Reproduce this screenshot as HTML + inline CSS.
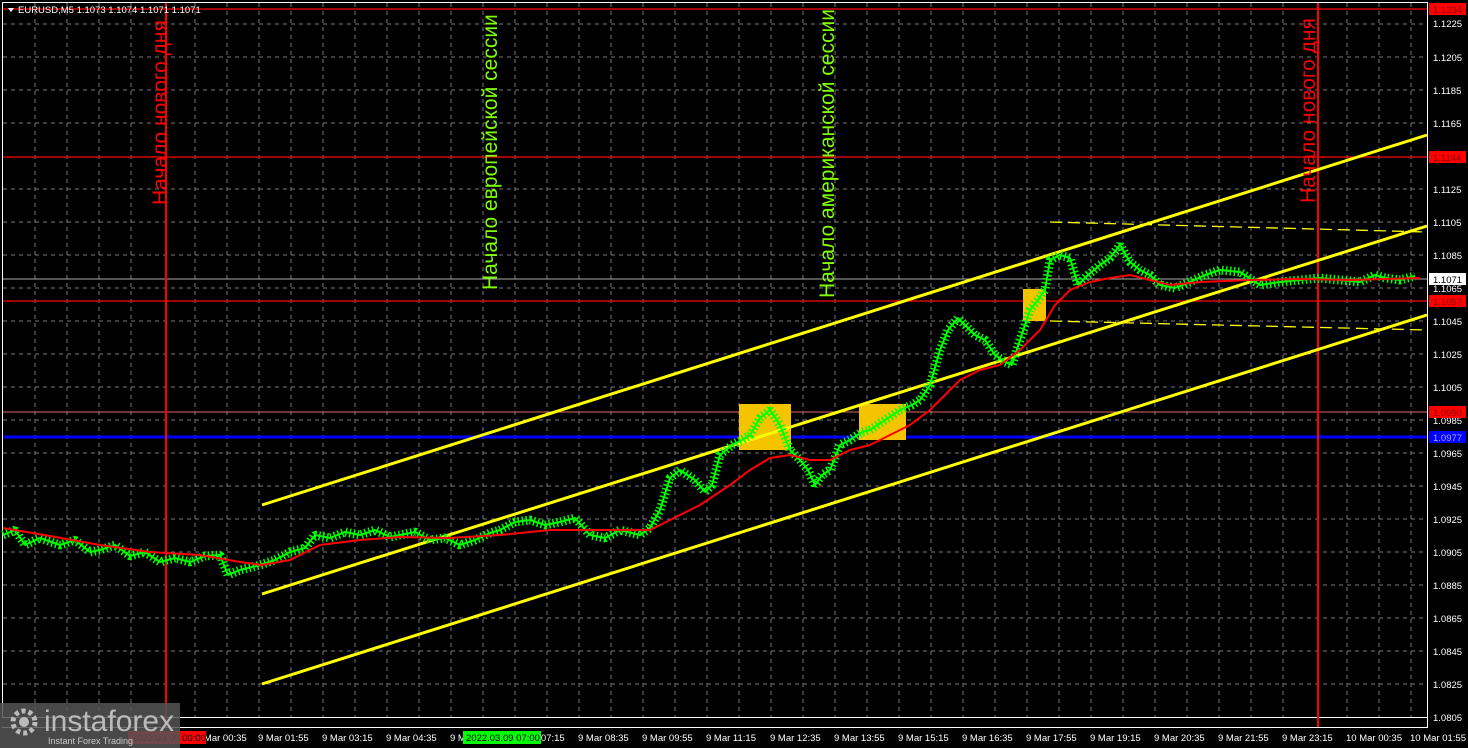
<!DOCTYPE html>
<html><head><meta charset="utf-8"><style>
html,body{margin:0;padding:0;background:#000;width:1468px;height:748px;overflow:hidden}
svg{display:block}
text{font-family:"Liberation Sans","DejaVu Sans",sans-serif}
</style></head><body>
<svg width="1468" height="748" viewBox="0 0 1468 748" xmlns="http://www.w3.org/2000/svg">
<rect width="1468" height="748" fill="#000"/>
<g stroke="#777" stroke-width="1" stroke-dasharray="4,4">
<line x1="3" y1="24" x2="1427" y2="24"/><line x1="3" y1="57" x2="1427" y2="57"/><line x1="3" y1="90" x2="1427" y2="90"/><line x1="3" y1="123" x2="1427" y2="123"/><line x1="3" y1="189" x2="1427" y2="189"/><line x1="3" y1="222" x2="1427" y2="222"/><line x1="3" y1="255" x2="1427" y2="255"/><line x1="3" y1="288" x2="1427" y2="288"/><line x1="3" y1="321" x2="1427" y2="321"/><line x1="3" y1="354" x2="1427" y2="354"/><line x1="3" y1="387" x2="1427" y2="387"/><line x1="3" y1="420" x2="1427" y2="420"/><line x1="3" y1="453" x2="1427" y2="453"/><line x1="3" y1="486" x2="1427" y2="486"/><line x1="3" y1="519" x2="1427" y2="519"/><line x1="3" y1="552" x2="1427" y2="552"/><line x1="3" y1="585" x2="1427" y2="585"/><line x1="3" y1="618" x2="1427" y2="618"/><line x1="3" y1="651" x2="1427" y2="651"/><line x1="3" y1="684" x2="1427" y2="684"/>
</g>
<g stroke="#777" stroke-width="1" stroke-dasharray="4,4">
<line x1="35" y1="3" x2="35" y2="717"/><line x1="67" y1="3" x2="67" y2="717"/><line x1="99" y1="3" x2="99" y2="717"/><line x1="131" y1="3" x2="131" y2="717"/><line x1="195" y1="3" x2="195" y2="717"/><line x1="227" y1="3" x2="227" y2="717"/><line x1="259" y1="3" x2="259" y2="717"/><line x1="291" y1="3" x2="291" y2="717"/><line x1="323" y1="3" x2="323" y2="717"/><line x1="355" y1="3" x2="355" y2="717"/><line x1="387" y1="3" x2="387" y2="717"/><line x1="419" y1="3" x2="419" y2="717"/><line x1="451" y1="3" x2="451" y2="717"/><line x1="483" y1="3" x2="483" y2="717"/><line x1="515" y1="3" x2="515" y2="717"/><line x1="547" y1="3" x2="547" y2="717"/><line x1="579" y1="3" x2="579" y2="717"/><line x1="611" y1="3" x2="611" y2="717"/><line x1="643" y1="3" x2="643" y2="717"/><line x1="675" y1="3" x2="675" y2="717"/><line x1="707" y1="3" x2="707" y2="717"/><line x1="739" y1="3" x2="739" y2="717"/><line x1="771" y1="3" x2="771" y2="717"/><line x1="803" y1="3" x2="803" y2="717"/><line x1="835" y1="3" x2="835" y2="717"/><line x1="867" y1="3" x2="867" y2="717"/><line x1="899" y1="3" x2="899" y2="717"/><line x1="931" y1="3" x2="931" y2="717"/><line x1="963" y1="3" x2="963" y2="717"/><line x1="995" y1="3" x2="995" y2="717"/><line x1="1027" y1="3" x2="1027" y2="717"/><line x1="1059" y1="3" x2="1059" y2="717"/><line x1="1091" y1="3" x2="1091" y2="717"/><line x1="1123" y1="3" x2="1123" y2="717"/><line x1="1155" y1="3" x2="1155" y2="717"/><line x1="1187" y1="3" x2="1187" y2="717"/><line x1="1219" y1="3" x2="1219" y2="717"/><line x1="1251" y1="3" x2="1251" y2="717"/><line x1="1283" y1="3" x2="1283" y2="717"/><line x1="1347" y1="3" x2="1347" y2="717"/><line x1="1379" y1="3" x2="1379" y2="717"/><line x1="1411" y1="3" x2="1411" y2="717"/>
</g>
<rect x="2.5" y="2.5" width="1425" height="715" fill="none" stroke="#fff"/>
<line x1="1427.5" y1="2" x2="1427.5" y2="727" stroke="#fff"/>
<line x1="2" y1="727.5" x2="1428" y2="727.5" stroke="#fff"/>
<g stroke="#f00" stroke-width="1.3">
<line x1="3" y1="9" x2="1427" y2="9"/><line x1="3" y1="157" x2="1427" y2="157"/><line x1="3" y1="301" x2="1427" y2="301"/>
</g>
<line x1="3" y1="412" x2="1427" y2="412" stroke="#d66" stroke-width="1"/>
<line x1="3" y1="279" x2="1427" y2="279" stroke="#aaa" stroke-width="1"/>
<line x1="3" y1="437" x2="1427" y2="437" stroke="#00f" stroke-width="3"/>
<line x1="166" y1="3" x2="166" y2="727" stroke="#f00" stroke-width="2"/>
<line x1="1318" y1="3" x2="1318" y2="727" stroke="#f00" stroke-width="2"/>
<rect x="739" y="404" width="52" height="46" fill="#f5c400"/>
<rect x="859" y="404" width="47" height="36" fill="#f5c400"/>
<rect x="1023" y="289" width="23" height="32" fill="#f5c400"/>
<g stroke="#ff0" stroke-width="1.3" stroke-dasharray="12,6">
<line x1="1050" y1="222" x2="1427" y2="232"/><line x1="1050" y1="321" x2="1427" y2="330"/>
</g>
<g stroke="#ff0" stroke-width="3">
<line x1="262" y1="505" x2="1427" y2="135"/><line x1="262" y1="594" x2="1427" y2="226"/><line x1="262" y1="684" x2="1427" y2="315"/>
</g>
<g fill="none" stroke="#0f0" stroke-linejoin="bevel">
<polyline id="pr" stroke-width="2" points="3,535 15,530 25,545 40,538 60,545 75,540 90,552 100,550 115,545 130,556 145,552 160,562 175,558 190,562 205,556 220,555 228,575 240,570 260,565 275,560 290,552 305,548 315,535 330,538 345,532 360,535 375,530 390,537 400,535 415,532 430,540 445,538 460,545 475,540 490,533 500,530 515,522 530,520 545,525 560,522 575,518 590,535 605,538 620,530 640,535 650,528 660,510 670,478 680,470 695,480 705,492 712,485 720,455 732,445 742,440 750,435 760,418 770,410 780,425 790,450 800,460 808,470 815,485 822,475 830,470 840,445 850,440 862,432 870,430 885,420 900,410 912,405 920,400 930,385 940,350 948,330 958,318 965,325 975,335 985,340 995,355 1005,362 1012,365 1020,340 1030,310 1038,300 1045,290 1050,260 1060,255 1070,258 1078,285 1088,275 1100,265 1110,258 1120,245 1130,262 1140,270 1150,275 1160,285 1175,288 1190,282 1205,275 1220,270 1240,272 1260,285 1280,282 1300,280 1320,278 1340,280 1360,282 1375,275 1385,278 1400,280 1415,276"/>
<polyline stroke-width="9" stroke-dasharray="1.5,2.5" points="3,535 15,530 25,545 40,538 60,545 75,540 90,552 100,550 115,545 130,556 145,552 160,562 175,558 190,562 205,556 220,555 228,575 240,570 260,565 275,560 290,552 305,548 315,535 330,538 345,532 360,535 375,530 390,537 400,535 415,532 430,540 445,538 460,545 475,540 490,533 500,530 515,522 530,520 545,525 560,522 575,518 590,535 605,538 620,530 640,535 650,528 660,510 670,478 680,470 695,480 705,492 712,485 720,455 732,445 742,440 750,435 760,418 770,410 780,425 790,450 800,460 808,470 815,485 822,475 830,470 840,445 850,440 862,432 870,430 885,420 900,410 912,405 920,400 930,385 940,350 948,330 958,318 965,325 975,335 985,340 995,355 1005,362 1012,365 1020,340 1030,310 1038,300 1045,290 1050,260 1060,255 1070,258 1078,285 1088,275 1100,265 1110,258 1120,245 1130,262 1140,270 1150,275 1160,285 1175,288 1190,282 1205,275 1220,270 1240,272 1260,285 1280,282 1300,280 1320,278 1340,280 1360,282 1375,275 1385,278 1400,280 1415,276"/>
</g>
<polyline fill="none" stroke="#f00" stroke-width="2" points="3,528 50,536 100,545 150,552 200,555 240,562 262,565 290,560 320,545 360,540 400,537 450,538 500,535 550,530 600,530 650,530 680,515 700,505 730,485 750,470 770,458 790,455 810,460 830,460 850,450 870,445 890,435 910,425 930,410 945,395 960,380 980,370 1000,365 1020,350 1040,330 1055,305 1070,290 1090,282 1110,278 1130,275 1150,280 1170,285 1200,282 1250,280 1300,279 1350,280 1420,278"/>
<text transform="translate(167,205) rotate(-90)" fill="#f00" font-size="21">Начало нового дня</text>
<text transform="translate(1315,203) rotate(-90)" fill="#f00" font-size="21">Начало нового дня</text>
<text transform="translate(497,290) rotate(-90)" fill="#7fff00" font-size="21">Начало европейской сессии</text>
<text transform="translate(834,298) rotate(-90)" fill="#7fff00" font-size="21">Начало американской сессии</text>
<path d="M8 8 L14 8 L11 12 Z" fill="#fff"/>
<text x="18" y="13" fill="#fff" font-size="9.5">EURUSD,M5  1.1073 1.1074 1.1071 1.1071</text>
<g font-size="9.5" fill="#fff">
<text x="1433" y="27">1.1225</text><text x="1433" y="61">1.1205</text><text x="1433" y="94">1.1185</text><text x="1433" y="127">1.1165</text><text x="1433" y="193">1.1125</text><text x="1433" y="226">1.1105</text><text x="1433" y="259">1.1085</text><text x="1433" y="292">1.1065</text><text x="1433" y="325">1.1045</text><text x="1433" y="358">1.1025</text><text x="1433" y="391">1.1005</text><text x="1433" y="424">1.0985</text><text x="1433" y="457">1.0965</text><text x="1433" y="490">1.0945</text><text x="1433" y="523">1.0925</text><text x="1433" y="556">1.0905</text><text x="1433" y="589">1.0885</text><text x="1433" y="622">1.0865</text><text x="1433" y="655">1.0845</text><text x="1433" y="688">1.0825</text><text x="1433" y="721">1.0805</text>
</g>
<rect x="1429" y="3" width="37" height="12" fill="#f00"/><text x="1433" y="13" font-size="9.5" fill="#800">1.1234</text>
<rect x="1429" y="151" width="37" height="12" fill="#f00"/><text x="1433" y="161" font-size="9.5" fill="#800">1.1144</text>
<rect x="1429" y="273" width="37" height="12" fill="#fff"/><text x="1433" y="283" font-size="9.5" fill="#000">1.1071</text>
<rect x="1429" y="295" width="37" height="12" fill="#f00"/><text x="1433" y="305" font-size="9.5" fill="#800">1.1057</text>
<rect x="1429" y="406" width="37" height="12" fill="#f00"/><text x="1433" y="416" font-size="9.5" fill="#800">1.0990</text>
<rect x="1429" y="431" width="37" height="12" fill="#00f"/><text x="1433" y="441" font-size="9.5" fill="#aaf">1.0977</text>
<g font-size="9.5" fill="#fff">
<text x="196" y="741">9 Mar 00:35</text><text x="258" y="741">9 Mar 01:55</text><text x="322" y="741">9 Mar 03:15</text><text x="386" y="741">9 Mar 04:35</text><text x="450" y="741">9 Mar 05:55</text><text x="514" y="741">9 Mar 07:15</text><text x="578" y="741">9 Mar 08:35</text><text x="642" y="741">9 Mar 09:55</text><text x="706" y="741">9 Mar 11:15</text><text x="770" y="741">9 Mar 12:35</text><text x="834" y="741">9 Mar 13:55</text><text x="898" y="741">9 Mar 15:15</text><text x="962" y="741">9 Mar 16:35</text><text x="1026" y="741">9 Mar 17:55</text><text x="1090" y="741">9 Mar 19:15</text><text x="1154" y="741">9 Mar 20:35</text><text x="1218" y="741">9 Mar 21:55</text><text x="1282" y="741">9 Mar 23:15</text><text x="1346" y="741">10 Mar 00:35</text><text x="1410" y="741">10 Mar 01:55</text>
</g>
<rect x="128" y="731" width="78" height="13" fill="#f00"/><text x="132" y="741" font-size="9.5" fill="#000">2022.03.09 00:00</text>
<rect x="463" y="731" width="78" height="13" fill="#0f0"/><text x="466" y="741" font-size="9.5" fill="#000">2022.03.09 07:00</text>
<rect x="0" y="703" width="180" height="45" fill="#555" fill-opacity="0.85"/>
<circle cx="24" cy="722" r="11" fill="none" stroke="#bbb" stroke-width="5" stroke-dasharray="4,3"/>
<circle cx="24" cy="722" r="5" fill="#bbb"/>
<text x="44" y="731" font-size="30" fill="#bbb">instaforex</text>
<text x="48" y="744" font-size="9" fill="#ccc">Instant Forex Trading</text>
</svg>
</body></html>
